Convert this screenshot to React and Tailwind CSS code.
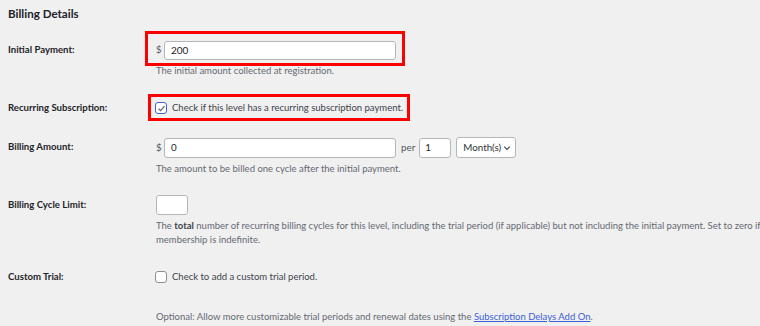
import React from "react";

const font = { fontFamily: 'Lato, "Noto Sans", sans-serif' };

function Label({ children, h }) {
  return (
    <div className={`w-[148px] shrink-0 flex items-center text-[9.6px] font-bold text-[#1d2327] ${h}`}>
      {children}
    </div>
  );
}

function Checkbox({ checked }) {
  return (
    <span
      className={`-ml-[1px] w-[12px] h-[12px] rounded-[3px] bg-white flex items-center justify-center shrink-0 border ${
        checked ? "border-[#4a5fd6] border-[1.5px]" : "border-[#8c8f94]"
      }`}
    >
      {checked && (
        <svg width="9" height="9" viewBox="0 0 10 10">
          <polyline points="1.8,5.2 4,7.4 8.4,2.4" fill="none" stroke="#5b6470" strokeWidth="1.4" />
        </svg>
      )}
    </span>
  );
}

export default function App() {
  return (
    <div className="w-[760px] h-[326px] overflow-hidden bg-[#f0f0f1] text-[#1d2327] pl-[8px] pt-[6px]" style={font}>
      <div className="text-[11.6px] leading-[16px] font-bold">Billing Details</div>

      {/* Initial payment */}
      <div className="flex mt-[19px]">
        <Label h="h-[19px]">Initial Payment:</Label>
        <div>
          <div className="relative flex items-center">
            <span className="text-[9.5px] text-[#50575e] w-[8px]">$</span>
            <div className="w-[232px] h-[19px] bg-white border border-[#b4b6ba] rounded-[3px] flex items-center px-[6px] text-[10px]">
              200
            </div>
            <div className="absolute left-[-11px] top-[-10px] right-[-9px] bottom-[-6px] border-[3px] border-[#ff0000] pointer-events-none" />
          </div>
          <div className="mt-[4px] text-[9.5px] leading-[14px] text-[#646970]">The initial amount collected at registration.</div>
        </div>
      </div>

      {/* Recurring */}
      <div className="flex mt-[22px]">
        <Label h="h-[16px]">Recurring Subscription:</Label>
        <div className="relative flex items-center h-[16px] gap-[5px] text-[9.5px] text-[#3c434a]">
          <Checkbox checked />
          <span>Check if this level has a recurring subscription payment.</span>
          <div className="absolute left-[-8px] top-[-6px] right-[-7px] bottom-[-5px] border-[3px] border-[#ff0000] pointer-events-none" />
        </div>
      </div>

      {/* Billing amount */}
      <div className="flex mt-[21px]">
        <Label h="h-[20px]">Billing Amount:</Label>
        <div>
          <div className="flex items-center text-[9.8px]">
            <span className="text-[#50575e] w-[8px]">$</span>
            <div className="w-[232px] h-[20px] bg-white border border-[#b4b6ba] rounded-[3px] flex items-center px-[6px]">0</div>
            <span className="ml-[5px] text-[#50575e]">per</span>
            <div className="ml-[4px] w-[32px] h-[20px] bg-white border border-[#b4b6ba] rounded-[3px] flex items-center px-[5px]">1</div>
            <div className="ml-[5px] w-[60px] h-[21px] bg-white border border-[#b4b6ba] rounded-[3px] flex items-center justify-between pl-[6px] pr-[4px] text-[#2c3338]">
              <span>Month(s)</span>
              <svg width="8" height="8" viewBox="0 0 10 10">
                <polyline points="1.5,3.2 5,6.7 8.5,3.2" fill="none" stroke="#3c434a" strokeWidth="1.4" />
              </svg>
            </div>
          </div>
          <div className="mt-[4px] text-[9.5px] leading-[14px] text-[#646970]">
            The amount to be billed one cycle after the initial payment.
          </div>
        </div>
      </div>

      {/* Billing cycle limit */}
      <div className="flex mt-[19px]">
        <Label h="h-[20px]">Billing Cycle Limit:</Label>
        <div>
          <div className="w-[32px] h-[20px] bg-white border border-[#b4b6ba] rounded-[3px]" />
          <div className="mt-[4px] text-[9.5px] leading-[14px] text-[#646970] whitespace-nowrap">
            The <span className="font-bold text-[#3c434a]">total</span> number of recurring billing cycles for this level, including the trial period (if applicable) but not including the initial payment. Set to zero if
            <br />
            membership is indefinite.
          </div>
        </div>
      </div>

      {/* Custom trial */}
      <div className="flex mt-[22px]">
        <Label h="h-[16px]">Custom Trial:</Label>
        <div className="flex items-center h-[16px] gap-[5px] text-[9.5px] text-[#3c434a]">
          <Checkbox />
          <span>Check to add a custom trial period.</span>
        </div>
      </div>

      <div className="flex mt-[25px]">
        <div className="w-[148px] shrink-0" />
        <div className="text-[9.5px] leading-[14px] text-[#646970] whitespace-nowrap">
          Optional: Allow more customizable trial periods and renewal dates using the{" "}
          <span className="text-[#3c5fd6] underline">Subscription Delays Add On</span>.
        </div>
      </div>
    </div>
  );
}
